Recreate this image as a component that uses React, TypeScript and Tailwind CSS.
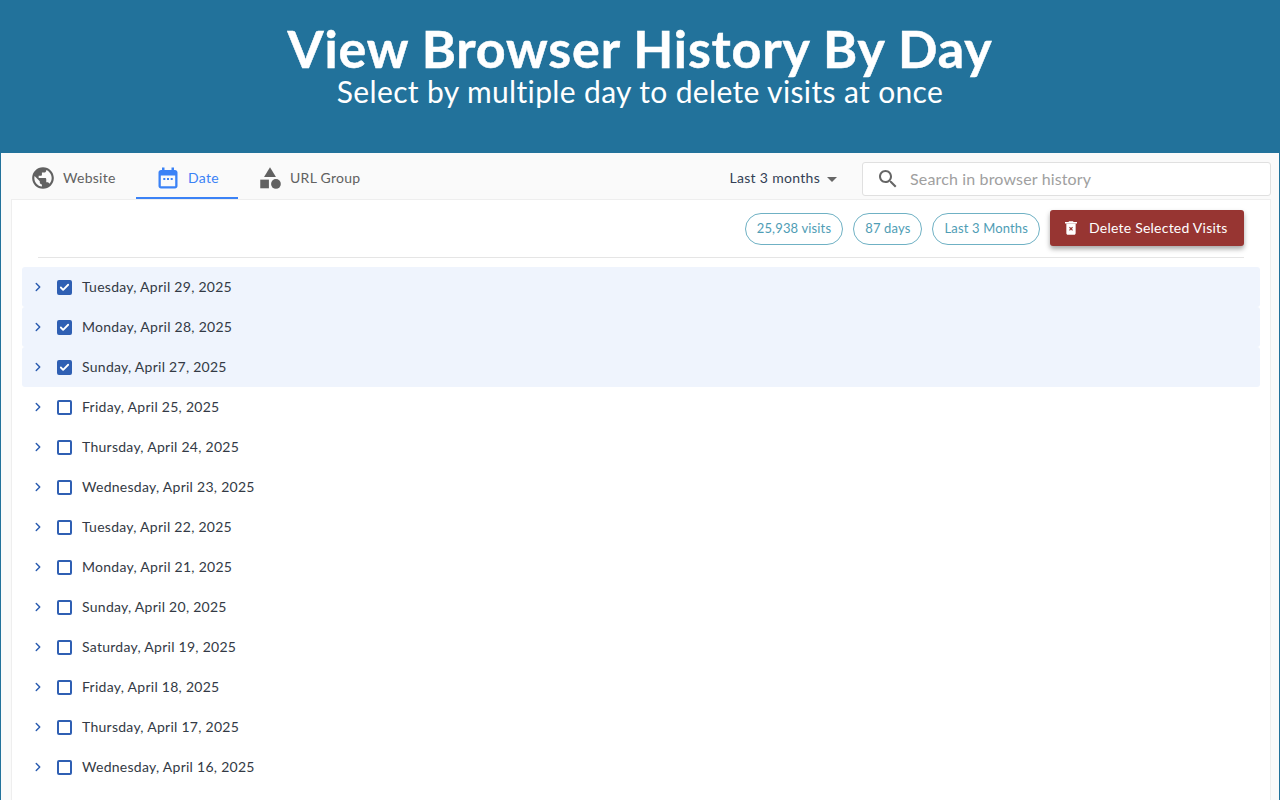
import { ChevronRight, Check } from 'lucide-react';

const days = [
    { label: 'Tuesday, April 29, 2025', selected: true },
    { label: 'Monday, April 28, 2025', selected: true },
    { label: 'Sunday, April 27, 2025', selected: true },
    { label: 'Friday, April 25, 2025', selected: false },
    { label: 'Thursday, April 24, 2025', selected: false },
    { label: 'Wednesday, April 23, 2025', selected: false },
    { label: 'Tuesday, April 22, 2025', selected: false },
    { label: 'Monday, April 21, 2025', selected: false },
    { label: 'Sunday, April 20, 2025', selected: false },
    { label: 'Saturday, April 19, 2025', selected: false },
    { label: 'Friday, April 18, 2025', selected: false },
    { label: 'Thursday, April 17, 2025', selected: false },
    { label: 'Wednesday, April 16, 2025', selected: false },
    { label: 'Tuesday, April 15, 2025', selected: false },
];

const chips = ['25,938 visits', '87 days', 'Last 3 Months'];

function GlobeIcon() {
    return (
        <svg viewBox="0 0 24 24" className="w-[26px] h-[26px] fill-[#616161]">
            <path d="M12 2C6.48 2 2 6.48 2 12s4.48 10 10 10 10-4.48 10-10S17.52 2 12 2zm-1 17.93c-3.95-.49-7-3.85-7-7.93 0-.62.08-1.21.21-1.79L9 15v1c0 1.1.9 2 2 2v1.93zm6.9-2.54c-.26-.81-1-1.39-1.9-1.39h-1v-3c0-.55-.45-1-1-1H8v-2h2c.55 0 1-.45 1-1V7h2c1.1 0 2-.9 2-2v-.41c2.93 1.19 5 4.06 5 7.41 0 2.08-.8 3.97-2.1 5.39z" />
        </svg>
    );
}

function CalendarIcon() {
    return (
        <svg viewBox="0 0 24 24" className="w-[24px] h-[24px] fill-[#3b82f6]">
            <path d="M6 1.500h2.500V4h7V1.500H18V4h1c1.400 0 2.500 1.100 2.500 2.500v13.500c0 1.400-1.100 2.500-2.500 2.500H5c-1.400 0-2.500-1.100-2.500-2.500V6.500C2.500 5.100 3.600 4 5 4h1zM4.800 9.500V20.200h14.400V9.500z" fillRule="evenodd" />
            <path d="M7.300 12h2v2h-2zM11 12h2v2h-2zM14.700 12h2v2h-2z" />
        </svg>
    );
}

function ShapesIcon() {
    return (
        <svg viewBox="0 0 24 24" className="w-[26px] h-[26px] fill-[#616161]">
            <path d="M12 2l-5.500 9h11z" />
            <circle cx="17.500" cy="17.500" r="4.500" />
            <path d="M3 13.500h8v8H3z" />
        </svg>
    );
}

function SearchIcon() {
    return (
        <svg viewBox="0 0 24 24" className="w-[24px] h-[24px] fill-[#666666]">
            <path d="M15.500 14h-.79l-.28-.27C15.410 12.590 16 11.110 16 9.500 16 5.910 13.090 3 9.500 3S3 5.910 3 9.500 5.910 16 9.500 16c1.610 0 3.090-.59 4.230-1.570l.27.28v.79l5 4.990L20.490 19l-4.990-5zm-6 0C7.010 14 5 11.990 5 9.500S7.010 5 9.500 5 14 7.010 14 9.500 11.990 14 9.500 14z" />
        </svg>
    );
}

function TrashIcon() {
    return (
        <svg viewBox="0 0 24 24" className="w-[18px] h-[18px] fill-white">
            <path d="M15 3H9v1H4v2h16V4h-5z" />
            <path d="M5.800 6h12.400v13c0 1.100-.9 2-2 2H7.800c-1.100 0-2-.9-2-2z" />
            <path d="M9.400 11.500l1.100-1.100 1.500 1.500 1.500-1.500 1.100 1.100-1.500 1.500 1.500 1.500-1.100 1.100-1.500-1.500-1.500 1.500-1.100-1.100 1.500-1.500z" className="fill-[#973532]" />
        </svg>
    );
}

function Tab({ icon, label, active, className }: { icon: React.ReactNode; label: string; active?: boolean; className: string }) {
    return (
        <div className={`h-[46px] pt-[6px] flex items-center text-sm tracking-[0.28px] border-b-2 ${active ? 'border-[#3b82f6] text-[#3b82f6]' : 'border-transparent text-[#616161]'} ${className}`}>
            {icon}
            <span>{label}</span>
        </div>
    );
}

function DayRow({ label, selected }: { label: string; selected: boolean }) {
    return (
        <div className={`h-10 shrink-0 flex items-center rounded-[3px] ${selected ? 'bg-[#eff4fd]' : ''}`}>
            <ChevronRight className="w-[14px] h-[14px] ml-[9px] text-[#2a5cb0]" strokeWidth={2.5} />
            <div className={`ml-[12px] w-[15px] h-[15px] rounded-[2px] border-2 border-[#2f5fb3] flex items-center justify-center ${selected ? 'bg-[#2f5fb3]' : 'bg-white'}`}>
                {selected && <Check className="w-[13px] h-[13px] text-white" strokeWidth={4} />}
            </div>
            <span className="ml-[10px] text-sm tracking-[0.27px] text-[#333a45]">{label}</span>
        </div>
    );
}

export default function App() {
    return (
        <div className="w-[1280px] h-[800px] overflow-hidden flex flex-col bg-[#22729b] font-['Lato','Noto_Sans',sans-serif]">
            <header className="h-[153px] shrink-0 flex flex-col items-center pt-[19px] text-white">
                <h1 className="text-[52px] leading-[58px] font-bold tracking-[0.85px] [-webkit-text-stroke:0.5px_white]">View Browser History By Day</h1>
                <p className="text-[30px] leading-[28px] tracking-[0.36px]">Select by multiple day to delete visits at once</p>
            </header>

            <main className="flex-1 min-h-0 mx-px flex flex-col bg-[#fafafa]">
                <div className="h-[46px] shrink-0 flex items-start pl-[11px] pr-[8px]">
                    <div className="flex">
                        <Tab icon={<GlobeIcon />} label="Website" className="w-[124px] pl-[18px] gap-[7px]" />
                        <Tab icon={<CalendarIcon />} label="Date" active className="w-[102px] pl-[20px] gap-[8px]" />
                        <Tab icon={<ShapesIcon />} label="URL Group" className="w-[130px] pl-[19px] gap-[7px]" />
                    </div>
                    <div className="ml-auto mt-[9px] flex items-center">
                        <span className="pb-[2px] text-sm tracking-[0.3px] text-[#333f55]">Last 3 months</span>
                        <span className="ml-[7px] w-0 h-0 border-x-[5px] border-x-transparent border-t-[5px] border-t-[#666]" />
                        <div className="ml-[25px] w-[409px] h-[34px] flex items-center bg-white border border-[#e0e0e0] rounded-[3px] pl-[13px]">
                            <SearchIcon />
                            <span className="ml-[10px] text-base tracking-[0.15px] text-[#a0a0a0]">Search in browser history</span>
                        </div>
                    </div>
                </div>

                <section className="flex-1 min-h-0 ml-[10px] mr-[8px] bg-white border-l border-t border-r border-[#eeeeee] flex flex-col overflow-hidden">
                    <div className="mx-[26px] h-[58px] shrink-0 flex items-center justify-end gap-[10px] border-b border-[#e5e5e5]">
                        {chips.map(chip => (
                            <span key={chip} className="h-[32px] flex items-center px-[11px] rounded-full border border-[#6fb1c4] text-[13px] tracking-[0.15px] text-[#4f9db5]">
                                {chip}
                            </span>
                        ))}
                        <button className="h-[36px] w-[194px] mb-px flex items-center pl-[12px] gap-[9px] rounded-[3px] bg-[#973532] text-white text-sm tracking-[0.23px] shadow-[0_3px_5px_rgba(0,0,0,0.35)]">
                            <TrashIcon />
                            Delete Selected Visits
                        </button>
                    </div>
                    <div className="mt-[9px] mx-[10px] flex flex-col">
                        {days.map(day => (
                            <DayRow key={day.label} label={day.label} selected={day.selected} />
                        ))}
                    </div>
                </section>
            </main>
        </div>
    );
}
